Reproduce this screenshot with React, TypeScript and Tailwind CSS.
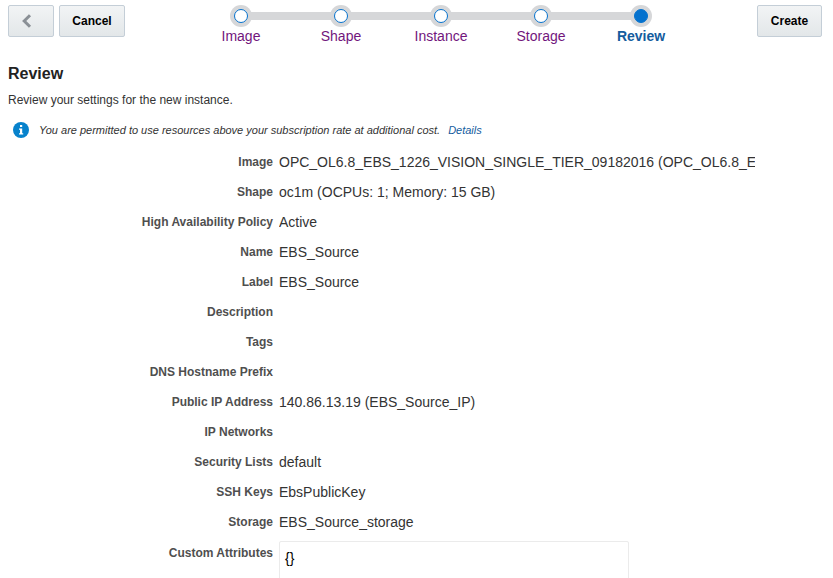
const steps = ['Image', 'Shape', 'Instance', 'Storage', 'Review'];
const current = 4;

const fields: [string, string][] = [
  ['Image', 'OPC_OL6.8_EBS_1226_VISION_SINGLE_TIER_09182016 (OPC_OL6.8_EBS_1226_VISION)'],
  ['Shape', 'oc1m (OCPUs: 1; Memory: 15 GB)'],
  ['High Availability Policy', 'Active'],
  ['Name', 'EBS_Source'],
  ['Label', 'EBS_Source'],
  ['Description', ''],
  ['Tags', ''],
  ['DNS Hostname Prefix', ''],
  ['Public IP Address', '140.86.13.19 (EBS_Source_IP)'],
  ['IP Networks', ''],
  ['Security Lists', 'default'],
  ['SSH Keys', 'EbsPublicKey'],
  ['Storage', 'EBS_Source_storage'],
];

const buttonClass =
  'flex h-8 items-center justify-center rounded-xs border border-[#c4ced7] bg-linear-to-b from-[#f2f4f5] to-[#e3e7e9] text-xs font-bold text-black';

function Stepper() {
  return (
    <nav aria-label="Progress" className="flex flex-1 justify-center">
      <ol className="flex">
        {steps.map((step, i) => (
          <li key={step} className="flex w-25 flex-col items-center">
            <div className="flex w-full items-center">
              <span className={`h-2 flex-1 ${i === 0 ? '' : 'bg-[#d6d7d9]'}`} />
              <span
                className={`-mx-px flex size-[22px] items-center justify-center rounded-full bg-[#d6d7d9]`}
              >
                <span
                  className={`size-3.5 rounded-full border border-[#0572ce] ${i === current ? 'bg-[#0572ce]' : 'bg-white'}`}
                />
              </span>
              <span className={`h-2 flex-1 ${i === steps.length - 1 ? '' : 'bg-[#d6d7d9]'}`} />
            </div>
            <a
              href={`#${step.toLowerCase()}`}
              aria-current={i === current ? 'step' : undefined}
              className={`mt-px text-sm leading-4 ${i === current ? 'font-bold text-[#145c9e]' : 'text-[#72167d]'}`}
            >
              {step}
            </a>
          </li>
        ))}
      </ol>
    </nav>
  );
}

export default function App() {
  return (
    <div className="h-screen overflow-hidden bg-white font-['Liberation_Sans',Arial,sans-serif] text-[#333333]">
      <header className="flex items-start pt-[5px] pr-[11px] pl-2">
        <div className="flex gap-[5px]">
          <button type="button" aria-label="Back" className={`${buttonClass} w-[46px] pr-2`}>
            <svg viewBox="0 0 10 14" className="h-3.5 w-2.5" fill="none" stroke="#8a9096" strokeWidth="3">
              <path d="M8 1.2 2.2 7 8 12.8" />
            </svg>
          </button>
          <button type="button" className={`${buttonClass} w-[66px]`}>
            Cancel
          </button>
        </div>
        <Stepper />
        <button type="button" className={`${buttonClass} w-[65px]`}>
          Create
        </button>
      </header>

      <main className="pt-5">
        <div className="px-2">
          <h1 className="text-base leading-5 font-bold text-[#222222]">Review</h1>
          <p className="mt-2 text-xs leading-4">Review your settings for the new instance.</p>
        </div>

        <div className="mt-3 flex h-5 items-center pl-[13px] text-[11px] italic">
          <svg viewBox="0 0 16 16" className="size-4" aria-hidden="true">
            <circle cx="8" cy="8" r="8" fill="#0782cc" />
            <path d="M7 3h2.2v2H7zM6 6.4h3.2v4.8h1v1.4H6v-1.4h1V7.8H6z" fill="#fff" />
          </svg>
          <p className="ml-2.5">You are permitted to use resources above your subscription rate at additional cost.</p>
          <a href="#details" className="ml-2 text-[#145c9e]">
            Details
          </a>
        </div>

        <dl className="mt-[7px]">
          {fields.map(([label, value]) => (
            <div key={label} className="grid h-[30px] grid-cols-[273px_minmax(0,476px)] items-center gap-x-1.5">
              <dt className="text-right text-xs font-bold text-[#4f4f4f]">{label}</dt>
              <dd className="overflow-hidden text-sm whitespace-nowrap">{value}</dd>
            </div>
          ))}
        </dl>
        <div className="grid grid-cols-[273px_minmax(0,350px)] gap-x-1.5 pt-1">
          <label htmlFor="attributes" className="pt-1 text-right text-xs font-bold text-[#4f4f4f]">
            Custom Attributes
          </label>
          <textarea
            id="attributes"
            rows={4}
            defaultValue="{}"
            className="resize-none rounded-xs border border-[#ebebeb] px-[5px] py-1.5 text-sm text-black"
          />
        </div>
      </main>
    </div>
  );
}
